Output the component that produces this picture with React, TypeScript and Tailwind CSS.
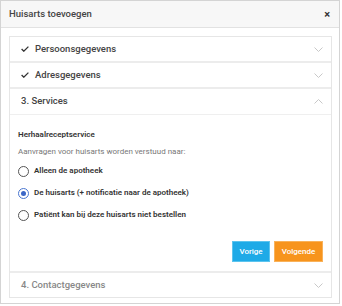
import React, { useState } from 'react';

const ChevronDown = () => (
  <svg width="9" height="5" viewBox="0 0 9 5" fill="none" stroke="#c8c8c8" strokeWidth="1">
    <path d="M0.5 0.5l4 4 4-4" />
  </svg>
);

const ChevronUp = () => (
  <svg width="9" height="5" viewBox="0 0 9 5" fill="none" stroke="#c8c8c8" strokeWidth="1">
    <path d="M0.5 4.5l4-4 4 4" />
  </svg>
);

const Check = () => (
  <svg width="8" height="6" viewBox="0 0 8 6" fill="none" stroke="#333" strokeWidth="1.3">
    <path d="M0.6 3l2.2 2.2L7.4 0.6" />
  </svg>
);

const OPTIONS = [
  { id: 'apotheek', label: 'Alleen de apotheek' },
  { id: 'huisarts', label: 'De huisarts (+ notificatie naar de apotheek)' },
  { id: 'niet', label: 'Patiënt kan bij deze huisarts niet bestellen' },
];

const App: React.FC = () => {
  const [choice, setChoice] = useState('huisarts');

  return (
    <div
      className="w-[340px] h-[304px] bg-white border border-[#d4d4d4] overflow-hidden"
      style={{ fontFamily: 'Roboto, "Liberation Sans", sans-serif' }}
    >
      {/* Header */}
      <div className="h-[27px] bg-[#f7f7f7] border-b border-[#e2e2e2] flex items-center justify-between pl-[8px] pr-[9px]">
        <span className="text-[9.5px] font-medium text-[#444]">Huisarts toevoegen</span>
        <span className="text-[11px] font-bold text-[#333] leading-none">×</span>
      </div>

      <div className="pl-[8px] pr-[7px] pt-[8px]">
        <div className="border border-[#e6e6e6]">
          {/* Step 1 */}
          <div className="h-[26px] flex items-center justify-between pl-[11px] pr-[8px] border-b-2 border-[#ececec]">
            <div className="flex items-center gap-[6px]">
              <Check />
              <span className="text-[9.5px] font-medium text-[#444]">Persoonsgegevens</span>
            </div>
            <ChevronDown />
          </div>
          {/* Step 2 */}
          <div className="h-[26px] flex items-center justify-between pl-[11px] pr-[8px] border-b-2 border-[#ececec]">
            <div className="flex items-center gap-[6px]">
              <Check />
              <span className="text-[9.5px] font-medium text-[#444]">Adresgegevens</span>
            </div>
            <ChevronDown />
          </div>
          {/* Step 3 */}
          <div className="h-[26px] flex items-center justify-between pl-[11px] pr-[8px] border-b border-[#efefef]">
            <span className="text-[9.5px] font-medium text-[#444]">3. Services</span>
            <ChevronUp />
          </div>
          <div className="pl-[8px] pr-[8px] pt-[14px] pb-[9px] border-b-2 border-[#ececec]">
            <div className="text-[8px] leading-[12px] font-semibold text-[#333]">Herhaalreceptservice</div>
            <div className="text-[8px] leading-[12px] text-[#777] mt-[5px]">
              Aanvragen voor huisarts worden verstuud naar:
            </div>
            <div className="mt-[7px] flex flex-col gap-[10px]">
              {OPTIONS.map((o) => (
                <label
                  key={o.id}
                  className="h-[12px] flex items-center gap-[5px] cursor-pointer"
                  onClick={() => setChoice(o.id)}
                >
                  <span
                    className={`w-[11px] h-[11px] rounded-full border flex items-center justify-center ${
                      choice === o.id ? 'border-[#4a76d0]' : 'border-[#555]'
                    }`}
                  >
                    {choice === o.id && <span className="w-[5px] h-[5px] rounded-full bg-[#3c67c7]" />}
                  </span>
                  <span className="text-[8px] font-semibold text-[#333]">{o.label}</span>
                </label>
              ))}
            </div>
            <div className="flex justify-end gap-[4px] mt-[20px]">
              <button className="h-[21px] w-[38px] bg-[#1eaae7] text-white text-[8px] font-medium border border-[#5cc4ee]">
                Vorige
              </button>
              <button className="h-[21px] w-[49px] bg-[#f7941d] text-white text-[8px] font-medium border border-[#f9b25a]">
                Volgende
              </button>
            </div>
          </div>
          {/* Step 4 */}
          <div className="h-[24px] flex items-center justify-between pl-[11px] pr-[8px]">
            <span className="text-[9.5px] font-medium text-[#888]">4. Contactgegevens</span>
            <ChevronDown />
          </div>
        </div>
      </div>
    </div>
  );
};

export default App;
